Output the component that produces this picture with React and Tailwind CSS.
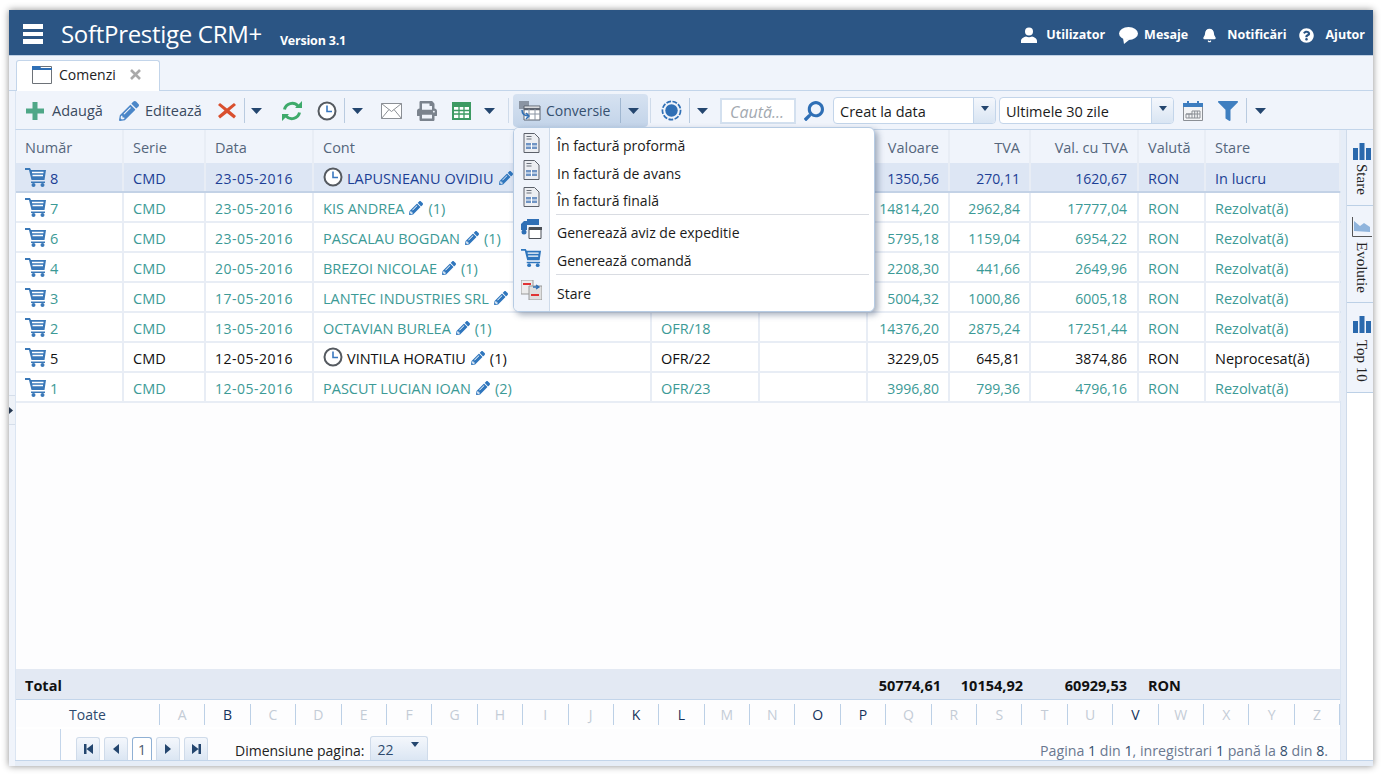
import { Bell } from 'lucide-react'
import { FaPencilAlt, FaPrint, FaSearch, FaFilter, FaQuestionCircle } from 'react-icons/fa'

const columns = [
  { label: 'Număr', width: 'w-[108px]' },
  { label: 'Serie', width: 'w-[82px]' },
  { label: 'Data', width: 'w-[108px]' },
  { label: 'Cont', width: 'w-[338px]' },
  { label: '', width: 'w-[108px]' },
  { label: '', width: 'w-[108px]' },
  { label: 'Valoare', width: 'w-[82px]', right: true },
  { label: 'TVA', width: 'w-[81px]', right: true },
  { label: 'Val. cu TVA', width: 'w-[108px]', right: true },
  { label: 'Valută', width: 'w-[67px]' },
  { label: 'Stare', width: 'w-[135px]' },
]

const rows = [
  { nr: '8', data: '23-05-2016', cont: 'LAPUSNEANU OVIDIU', clock: true, oferta: '', val: '1350,56', tva: '270,11', total: '1620,67', stare: 'In lucru', tone: 'selected' },
  { nr: '7', data: '23-05-2016', cont: 'KIS ANDREA', count: '(1)', oferta: '', val: '14814,20', tva: '2962,84', total: '17777,04', stare: 'Rezolvat(ă)', tone: 'done' },
  { nr: '6', data: '23-05-2016', cont: 'PASCALAU BOGDAN', count: '(1)', oferta: '', val: '5795,18', tva: '1159,04', total: '6954,22', stare: 'Rezolvat(ă)', tone: 'done' },
  { nr: '4', data: '20-05-2016', cont: 'BREZOI NICOLAE', count: '(1)', oferta: '', val: '2208,30', tva: '441,66', total: '2649,96', stare: 'Rezolvat(ă)', tone: 'done' },
  { nr: '3', data: '17-05-2016', cont: 'LANTEC INDUSTRIES SRL', oferta: '', val: '5004,32', tva: '1000,86', total: '6005,18', stare: 'Rezolvat(ă)', tone: 'done' },
  { nr: '2', data: '13-05-2016', cont: 'OCTAVIAN BURLEA', count: '(1)', oferta: 'OFR/18', val: '14376,20', tva: '2875,24', total: '17251,44', stare: 'Rezolvat(ă)', tone: 'done' },
  { nr: '5', data: '12-05-2016', cont: 'VINTILA HORATIU', count: '(1)', clock: true, oferta: 'OFR/22', val: '3229,05', tva: '645,81', total: '3874,86', stare: 'Neprocesat(ă)', tone: 'new' },
  { nr: '1', data: '12-05-2016', cont: 'PASCUT LUCIAN IOAN', count: '(2)', oferta: 'OFR/23', val: '3996,80', tva: '799,36', total: '4796,16', stare: 'Rezolvat(ă)', tone: 'done' },
]

const toneClass = {
  selected: 'bg-[#dde6f4] text-[#1c3f95] border-b-[#c3d2e6]',
  done: 'bg-white text-[#3c9a96] border-b-[#e8edf5]',
  new: 'bg-white text-[#111111] border-b-[#e8edf5]',
}

const letters = [
  ['A', 0], ['B', 1], ['C', 0], ['D', 0], ['E', 0], ['F', 0], ['G', 0], ['H', 0], ['I', 0], ['J', 0], ['K', 1], ['L', 1], ['M', 0],
  ['N', 0], ['O', 1], ['P', 1], ['Q', 0], ['R', 0], ['S', 0], ['T', 0], ['U', 0], ['V', 1], ['W', 0], ['X', 0], ['Y', 0], ['Z', 0],
]

function Caret({ className = '' }) {
  return (
    <svg width="11" height="6" viewBox="0 0 11 6" className={`shrink-0 ${className}`}>
      <path d="M0 0h11L5.500 6z" fill="#24466f" />
    </svg>
  )
}

function Cart({ size = 22, color = '#3a78b8' }) {
  return (
    <svg width={size} height={size} viewBox="0 0 22 22" className="shrink-0">
      <path d="M0 2h5l1 2h15l-1.500 10H6.500L4 4H0z" fill={color} />
      <path d="M7 6.500h11.500M7.500 9.500h10.500" stroke="#fff" strokeWidth="1.300" />
      <path d="M6 15.500h14v1.500H6z" fill={color} />
      <circle cx="8.500" cy="19" r="2" fill={color} />
      <circle cx="17.500" cy="19" r="2" fill={color} />
    </svg>
  )
}

function Clock({ size = 20, className = '' }) {
  return (
    <svg width={size} height={size} viewBox="0 0 20 20" className={`shrink-0 ${className}`}>
      <circle cx="10" cy="10" r="8.500" fill="#fff" stroke="#555a60" strokeWidth="2" />
      <path d="M10 4.500V10.500H15" fill="none" stroke="#3a78c0" strokeWidth="1.600" />
    </svg>
  )
}

function Doc() {
  return (
    <svg width="17" height="20" viewBox="0 0 17 20">
      <path d="M1 .500h10.500L16 5v14.500H1z" fill="#eceef2" stroke="#5c616a" />
      <path d="M3.500 3.500h5M3.500 6h5" stroke="#6a707a" />
      <path d="M3 10h11v6H3z" fill="#6f94c4" />
      <path d="M3 13h11M8.500 10v6" stroke="#fff" />
    </svg>
  )
}

function Bars() {
  return (
    <svg width="18" height="17" viewBox="0 0 18 17" className="shrink-0">
      <path d="M0 5h5v12H0zM6.500 0h5v17h-5zM13 5h5v12h-5z" fill="#2a69ad" />
    </svg>
  )
}

function Sep({ className = '' }) {
  return <span className={`w-px h-[25px] shrink-0 bg-[#b9cbe0] ${className}`} />
}

function Cell({ col, children, className = '' }) {
  return (
    <div className={`${col.width} shrink-0 h-full flex items-center px-[9px] ${col.right ? 'justify-end' : ''} ${className}`}>
      {children}
    </div>
  )
}

function PagerBtn({ children, active }) {
  return (
    <div className={`h-[23px] flex items-center justify-center rounded-t-[3px] border-t border-x ${active ? 'w-[20px] border-[#8fb0d4] bg-white' : 'w-[24px] border-[#cfdbea] bg-gradient-to-b from-[#f4f7fc] to-[#dbe6f3]'}`}>
      {children}
    </div>
  )
}

function MenuItem({ icon, label, h, iconPad, labelPad = '' }) {
  return (
    <div className={`flex items-center ${h}`}>
      <div className={`w-[36px] h-full shrink-0 flex items-center justify-center bg-[#f0f4fb] border-r border-r-[#cfdbea] ${iconPad}`}>{icon}</div>
      <span className={`pl-[7px] text-[14px] text-[#1b1b1b] ${labelPad}`}>{label}</span>
    </div>
  )
}

function MenuSep() {
  return (
    <div className="flex h-[1px]">
      <div className="w-[36px] shrink-0 bg-[#f0f4fb] border-r border-r-[#cfdbea]" />
      <div className="ml-[6px] mr-[5px] flex-1 bg-[#d9dce2]" />
    </div>
  )
}

function Select({ label, width }) {
  return (
    <div className={`${width} h-[27px] flex rounded-[4px] border border-[#c3d5ea] bg-white overflow-hidden`}>
      <span className="flex-1 pl-[6px] pt-[3px] flex items-center text-[14.500px] text-[#1b1b1b]">{label}</span>
      <span className="w-[22px] flex items-start justify-center pt-[8px] border-l border-l-[#c3d5ea] bg-gradient-to-b from-[#f4f7fc] to-[#d9e5f3]">
        <svg width="8" height="5" viewBox="0 0 8 5"><path d="M0 0h8L4 5z" fill="#24466f" /></svg>
      </span>
    </div>
  )
}

export default function App() {
  return (
    <div className="w-[1381px] h-[774px] bg-white pl-[9px] pt-[10px] overflow-hidden font-['Open_Sans','Noto_Sans',sans-serif]">
      <div className="relative w-[1364px] h-[756px] flex flex-col bg-[#f0f4fb] shadow-[0_0_7px_rgba(0,0,0,0.45)]">
        {/* Header */}
        <header className="h-[46px] shrink-0 pt-[3px] bg-[#2b5584] flex items-center text-white border-b border-b-[#bfd0e4]">
          <div className="ml-[14px] w-[20px] flex flex-col gap-[3px]">
            <span className="h-[5px] bg-white" />
            <span className="h-[4px] bg-white" />
            <span className="h-[5px] bg-white" />
          </div>
          <span className="ml-[18px] text-[24px] leading-none tracking-[-0.3px]">SoftPrestige CRM+</span>
          <span className="ml-[18px] mt-[14px] text-[12.500px] font-bold tracking-[-0.2px]">Version 3.1</span>
          <div className="ml-auto mr-[8px] mt-[2px] flex items-center text-[12.500px] font-bold">
            <svg width="16" height="16" viewBox="0 0 16 16">
              <circle cx="8" cy="4.500" r="4" fill="#fff" />
              <path d="M0 16v-2c0-2.500 3-4 5-4.500 1.500 1 4.500 1 6 0 2 .5 5 2 5 4.500v2z" fill="#fff" />
            </svg>
            <span className="ml-[9px]">Utilizator</span>
            <svg width="19" height="18" viewBox="0 0 19 18" className="ml-[14px]">
              <ellipse cx="9.500" cy="7.500" rx="9.500" ry="6.500" fill="#fff" />
              <path d="M4 12l1 6 5-4z" fill="#fff" />
            </svg>
            <span className="ml-[6px]">Mesaje</span>
            <Bell size={15} fill="#fff" className="ml-[14px]" />
            <span className="ml-[10px]">Notificări</span>
            <FaQuestionCircle size={15} className="ml-[12px]" />
            <span className="ml-[12px]">Ajutor</span>
          </div>
        </header>

        {/* Tab strip */}
        <div className="h-[35px] shrink-0 pl-[7px] pt-[4px] pr-[1px] border-b border-b-[#c3d5ea]">
          <div className="w-[144px] h-[31px] pb-[4px] flex items-center bg-white rounded-t-[3px] border border-b-0 border-[#c3d5ea] pl-[15px]">
            <svg width="20" height="19" viewBox="0 0 20 19" className="shrink-0">
              <path d="M.500 1.500h19v17H.500z" fill="#fff" stroke="#6d7278" />
              <path d="M0 1h8l1 2h11v2H0z" fill="#2f6fb5" />
            </svg>
            <span className="ml-[7px] text-[14px] text-[#222]">Comenzi</span>
            <svg width="11" height="11" viewBox="0 0 11 11" className="ml-[14px]">
              <path d="M1 1l9 9M10 1l-9 9" stroke="#a9a9a9" strokeWidth="2.600" />
            </svg>
          </div>
        </div>

        <div className="flex-1 min-h-0 ml-[6px] flex flex-col">
          {/* Toolbar */}
          <div className="h-[39px] shrink-0 pt-[1px] flex items-center border-b border-b-[#c3d5ea] border-l border-l-[#dbe5f2] text-[14.500px] text-[#3a4a60]">
            <svg width="18" height="18" viewBox="0 0 18 18" className="ml-[10px] shrink-0">
              <path d="M6.500 0h5v6.500H18v5h-6.500V18h-5v-6.500H0v-5h6.500z" fill="#4fa787" />
            </svg>
            <span className="ml-[8px] w-[51px]">Adaugă</span>
            <FaPencilAlt size={20} color="#4a86c8" className="ml-[16px] shrink-0" />
            <span className="ml-[6px] w-[56px]">Editează</span>
            <svg width="18" height="17" viewBox="0 0 18 17" className="ml-[17px] shrink-0">
              <path d="M2 1l7 5.500L16 1l2 2-6.500 5.500L18 14l-2 2.500-7-5.500-7 5.500L0 14l6.500-5.500L0 3z" fill="#d94f2e" />
            </svg>
            <Sep className="ml-[8px]" />
            <Caret className="ml-[6px]" />
            <svg width="22" height="22" viewBox="0 0 22 22" className="ml-[19px] shrink-0">
              <path d="M3.500 9.500A7.800 7.800 0 0 1 17 6M18.500 12.500A7.800 7.800 0 0 1 5 16" fill="none" stroke="#3eaa6b" strokeWidth="3" />
              <path d="M14 8h7V1zM8 14H1v7z" fill="#3eaa6b" />
            </svg>
            <Clock className="ml-[14px]" />
            <Sep className="ml-[7px]" />
            <Caret className="ml-[7px]" />
            <svg width="21" height="16" viewBox="0 0 21 16" className="ml-[18px] shrink-0">
              <path d="M.500.500h20v15H.500z" fill="#fff" stroke="#8b8f95" />
              <path d="M.500.500l10 8 10-8M.500 15.500l7.500-9M20.500 15.500l-7.500-9" fill="none" stroke="#8b8f95" />
            </svg>
            <FaPrint size={20} color="#7b838d" className="ml-[15px] shrink-0" />
            <svg width="19" height="18" viewBox="0 0 19 18" className="ml-[15px] shrink-0">
              <path d="M0 0h19v18H0z" fill="#3d9a63" />
              <path d="M2 5h15v11H2z" fill="#fff" />
              <path d="M7 5v11M12 5v11M2 8.500h15M2 12h15" stroke="#3d9a63" strokeWidth="1.300" />
            </svg>
            <Caret className="ml-[13px]" />
            <span className="ml-[13px] w-px h-[25px] shrink-0 bg-[#cfdbea]" />
            <div className="ml-[4px] w-[135px] h-[33px] shrink-0 flex items-center rounded-[4px] bg-gradient-to-b from-[#d6e2f1] to-[#c3d4e9] text-[14px] text-[#35506f]">
              <svg width="22" height="20" viewBox="0 0 22 20" className="ml-[6px] shrink-0">
                <path d="M0 0h10v8H0z" fill="#8a94a2" />
                <path d="M5 5h16v14H5z" fill="#fff" stroke="#5d6470" />
                <path d="M5 8h16" stroke="#5d6470" strokeWidth="2.500" />
                <path d="M10 8v11M16 8v11M5 13h16" stroke="#8a94a2" />
                <path d="M3 9c0 4 3 6 7 6m-3-3l3 3-3 3" fill="none" stroke="#2f6fb5" strokeWidth="1.500" />
              </svg>
              <span className="ml-[5px] w-[65px]">Conversie</span>
              <span className="ml-[9px] w-px h-[25px] bg-[#9fb6d0]" />
              <Caret className="ml-[7px]" />
            </div>
            <span className="ml-[2px] w-px h-[25px] shrink-0 bg-[#cfdbea]" />
            <svg width="21" height="21" viewBox="0 0 22 22" className="ml-[10px] shrink-0">
              <circle cx="11" cy="11" r="9.500" fill="none" stroke="#2f6fb5" strokeWidth="1.800" strokeDasharray="5 1.500" />
              <circle cx="11" cy="11" r="6.500" fill="#2f6fb5" />
            </svg>
            <Sep className="ml-[7px]" />
            <Caret className="ml-[7px]" />
            <div className="ml-[12px] w-[76px] h-[26px] shrink-0 flex items-center pl-[8px] pt-[2px] border-2 border-[#d3e0ef] bg-white text-[16px] italic text-[#a3a9b0]">Caută...</div>
            <FaSearch size={20} color="#2f6fb5" className="ml-[8px] shrink-0 -scale-x-100" />
            <div className="ml-[9px] shrink-0"><Select label="Creat la data" width="w-[163px]" /></div>
            <div className="ml-[3px] shrink-0"><Select label="Ultimele 30 zile" width="w-[175px]" /></div>
            <svg width="20" height="20" viewBox="0 0 20 20" className="ml-[9px] shrink-0">
              <path d="M.500 2.500h19v17H.500z" fill="#f3f4f6" stroke="#8b8f95" />
              <path d="M0 2h20v4H0zM4 0h2v4H4zM14 0h2v4h-2z" fill="#3d7dbf" />
              <path d="M9 10h8v7H3v-4h6zM11.700 10v7M14.300 10v7M6 13v4M9 13v4M3 13h14" fill="none" stroke="#8b8f95" />
            </svg>
            <FaFilter size={20} color="#3f7fc0" className="ml-[15px] shrink-0" />
            <Sep className="ml-[8px]" />
            <Caret className="ml-[8px]" />
          </div>

          {/* Grid and side tabs */}
          <div className="flex-1 min-h-0 flex">
            <div className="w-[1326px] shrink-0 flex flex-col bg-[#fdfdfe] border-x border-x-[#dbe5f2]">
              <div className="h-[33px] shrink-0 flex bg-[#f0f4fb] text-[14.500px] text-[#55667c]">
                {columns.map((col, i) => (
                  <Cell key={i} col={col} className="pt-[2px] border-r-2 border-r-[#e8edf5]">{col.label}</Cell>
                ))}
              </div>

              {rows.map((row) => (
                <div key={row.nr} className={`h-[30px] shrink-0 flex border-b-2 text-[14.500px] ${toneClass[row.tone]}`}>
                  <Cell col={columns[0]} className="pt-[3px] border-r-2 border-r-[#e8edf5]">
                    <span className="-mt-[3px]"><Cart /></span>
                    <span className="ml-[3px]">{row.nr}</span>
                  </Cell>
                  <Cell col={columns[1]} className="pt-[3px] border-r-2 border-r-[#e8edf5]">CMD</Cell>
                  <Cell col={columns[2]} className="pt-[3px] border-r-2 border-r-[#e8edf5]"><span className="text-[14px] tracking-[0.5px]">{row.data}</span></Cell>
                  <Cell col={columns[3]} className="pt-[3px] border-r-2 border-r-[#e8edf5]">
                    {row.clock && <Clock className="mr-[4px] -mt-[3px]" />}
                    <span>{row.cont}</span>
                    <FaPencilAlt size={14} color="#2f76bd" className="ml-[5px] -mt-[2px] shrink-0" />
                    {row.count && <span className="ml-[5px]">{row.count}</span>}
                  </Cell>
                  <Cell col={columns[4]} className="pt-[3px] border-r-2 border-r-[#e8edf5]">{row.oferta}</Cell>
                  <Cell col={columns[5]} className="pt-[3px] border-r-2 border-r-[#e8edf5]" />
                  <Cell col={columns[6]} className="pt-[3px] border-r-2 border-r-[#e8edf5]"><span className="text-[14px]">{row.val}</span></Cell>
                  <Cell col={columns[7]} className="pt-[3px] border-r-2 border-r-[#e8edf5]"><span className="text-[14px]">{row.tva}</span></Cell>
                  <Cell col={columns[8]} className="pt-[3px] pr-[10px] border-r-2 border-r-[#e8edf5]"><span className="text-[14px]">{row.total}</span></Cell>
                  <Cell col={columns[9]} className="pt-[3px] border-r-2 border-r-[#e8edf5]">RON</Cell>
                  <Cell col={columns[10]} className="pt-[3px] border-r-2 border-r-[#e8edf5]">{row.stare}</Cell>
                </div>
              ))}

              <div className="flex-1 min-h-0" />

              <div className="h-[31px] shrink-0 pt-[3px] flex items-center bg-[#e3e9f3] border-b border-b-[#c3d5ea] text-[14.500px] font-bold text-[#111]">
                <span className="ml-[9px] w-[32px]">Total</span>
                <span className="ml-[809px] w-[75px] text-right">50774,61</span>
                <span className="ml-[7px] w-[75px] text-right">10154,92</span>
                <span className="ml-[2px] w-[102px] text-right">60929,53</span>
                <span className="ml-[21px]">RON</span>
              </div>

              <div className="h-[29px] shrink-0 pt-[1px] flex items-center text-[14px] border-b-2 border-b-white">
                <span className="w-[144px] shrink-0 text-center text-[#2d4a6e] border-r border-r-[#bcd0e6]">Toate</span>
                {letters.map(([letter, on]) => (
                  <span key={letter} className={`w-[45.400px] shrink-0 text-center border-r border-r-[#bcd0e6] ${on ? 'text-[#16335c]' : 'text-[#c4ccd6]'}`}>{letter}</span>
                ))}
              </div>

              <div className="h-[31px] shrink-0 flex items-end overflow-hidden text-[14px]">
                <div className="w-[45px] h-full shrink-0 border-r border-r-[#c3d5ea]" />
                <div className="ml-[15px] flex gap-[4px]">
                  <PagerBtn><svg width="9" height="10" viewBox="0 0 9 10"><path d="M0 0h2.500v10H0zM9 0v10L2.500 5z" fill="#24466f" /></svg></PagerBtn>
                  <PagerBtn><svg width="6" height="10" viewBox="0 0 6 10"><path d="M6 0v10L0 5z" fill="#24466f" /></svg></PagerBtn>
                  <PagerBtn active><span className="text-[#4a5a70]">1</span></PagerBtn>
                  <PagerBtn><svg width="6" height="10" viewBox="0 0 6 10"><path d="M0 0v10l6-5z" fill="#24466f" /></svg></PagerBtn>
                  <PagerBtn><svg width="9" height="10" viewBox="0 0 9 10"><path d="M0 0v10l6.500-5zM6.500 0H9v10H6.500z" fill="#24466f" /></svg></PagerBtn>
                </div>
                <span className="ml-[27px] -mb-[1px] text-[#222]">Dimensiune pagina:</span>
                <div className="ml-[5px] w-[58px] h-[24px] flex rounded-t-[3px] border-t border-x border-[#cfdbea] bg-gradient-to-b from-[#f4f7fc] to-[#dbe6f3] pl-[7px] pt-[2px] text-[#2d4a6e]">
                  <span>22</span>
                  <svg width="8" height="5" viewBox="0 0 8 5" className="ml-[17px] mt-[3px]"><path d="M0 0h8L4 5z" fill="#24466f" /></svg>
                </div>
                <span className="ml-auto mr-[12px] -mb-[1px] text-[14.200px] text-[#6a7890]">Pagina <span className="text-[#35506f]">1</span> din <span className="text-[#35506f]">1</span>, inregistrari <span className="text-[#35506f]">1</span> pană la <span className="text-[#35506f]">8</span> din <span className="text-[#35506f]">8</span>.</span>
              </div>
            </div>

            <div className="w-[6px] shrink-0 bg-[#e6edf7] border-r border-r-[#cfdbea]" />

            <div className="flex-1 bg-white">
              <div className="h-[76px] flex flex-col items-center pl-[4px] pt-[13px] bg-[#f0f4fb] border-b border-b-[#bcd0e6]">
                <Bars />
                <span className="mt-[4px] [writing-mode:vertical-rl] text-[15px] leading-[18px] text-[#222] font-['Liberation_Serif',serif]">Stare</span>
              </div>
              <div className="h-[97px] flex flex-col items-center pl-[4px] pt-[11px] bg-[#f0f4fb] border-b border-b-[#bcd0e6]">
                <svg width="20" height="20" viewBox="0 0 20 20" className="shrink-0">
                  <path d="M2 14V4l6 5 4-3 6 4v5z" fill="#8fb4dc" />
                  <path d="M.500 0v19.500H20" fill="none" stroke="#555" />
                </svg>
                <span className="mt-[5px] [writing-mode:vertical-rl] text-[15px] leading-[18px] text-[#222] font-['Liberation_Serif',serif]">Evolutie</span>
              </div>
              <div className="h-[90px] flex flex-col items-center pl-[4px] pt-[13px] bg-[#f0f4fb] border-b border-b-[#bcd0e6]">
                <Bars />
                <span className="mt-[7px] [writing-mode:vertical-rl] text-[15px] leading-[18px] text-[#222] font-['Liberation_Serif',serif]">Top 10</span>
              </div>
            </div>
          </div>

          <div className="h-[6px] shrink-0 bg-[#e6edf7] border-t border-t-[#c3d5ea]" />
        </div>

        {/* Left edge strip arrow */}
        <div className="absolute left-0 top-[385px] w-[6px] h-[30px] flex items-center border-y border-y-[#d5deea] bg-[#eef2f8]">
          <svg width="4" height="7" viewBox="0 0 4 7"><path d="M0 0v7l4-3.500z" fill="#24364f" /></svg>
        </div>

        {/* Conversie dropdown */}
        <div className="absolute left-[504px] top-[117px] w-[362px] h-[185px] flex flex-col bg-white rounded-[6px] border border-[#b6cbe3] overflow-hidden shadow-[3px_3px_6px_rgba(60,80,110,0.45)]">
          <MenuItem icon={<Doc />} label="În factură proformă" h="h-[32px]" iconPad="pb-[2px]" labelPad="pt-[3px]" />
          <MenuItem icon={<Doc />} label="In factură de avans" h="h-[27px]" iconPad="pb-[8px]" />
          <MenuItem icon={<Doc />} label="În factură finală" h="h-[27px]" iconPad="pb-[7px]" />
          <MenuSep />
          <MenuItem
            icon={
              <svg width="21" height="20" viewBox="0 0 21 20">
                <path d="M0 5l3-3h3v9H0zM6 0h12v6H6z" fill="#2f6fb5" />
                <circle cx="3" cy="13" r="2.500" fill="#2f6fb5" />
                <path d="M8 8.500h12v11H8z" fill="#fff" stroke="#4a4f56" />
                <path d="M8 8h13v3H8z" fill="#4a4f56" />
              </svg>
            }
            label="Generează aviz de expeditie"
            h="h-[32px]"
            iconPad="pb-[4px]"
            labelPad="pt-[2px]"
          />
          <MenuItem icon={<Cart size={21} color="#2f76bd" />} label="Generează comandă" h="h-[27px]" iconPad="pb-[6px]" />
          <MenuSep />
          <MenuItem
            icon={
              <svg width="21" height="20" viewBox="0 0 21 20">
                <path d="M0 0h12v14H0z" fill="#ececec" stroke="#999" />
                <path d="M8 6h13v14H8z" fill="#dfdfdf" stroke="#999" />
                <path d="M2 3h8v2H2zM10 14h8v2h-8z" fill="#e03434" />
                <path d="M12 7h5m-2-2l3 2-3 2" fill="none" stroke="#2f6fb5" strokeWidth="1.300" />
              </svg>
            }
            label="Stare"
            h="h-[36px]"
            iconPad="pb-[7px]"
          />
        </div>
      </div>
    </div>
  )
}
